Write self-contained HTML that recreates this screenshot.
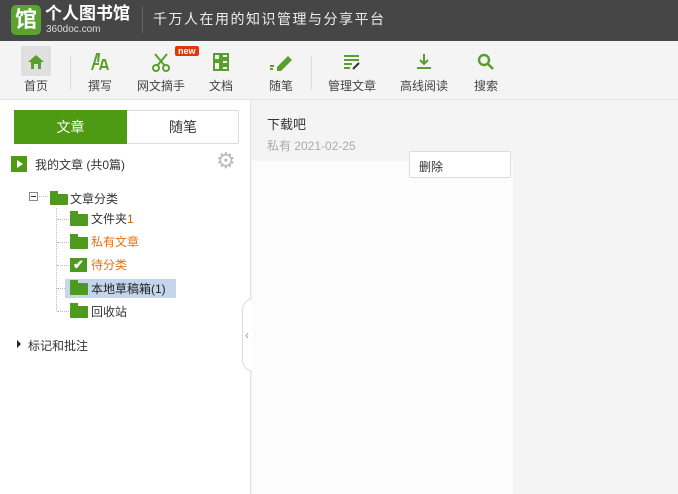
<!DOCTYPE html>
<html><head><meta charset="utf-8"><style>
*{margin:0;padding:0;box-sizing:border-box}
body{width:678px;height:494px;overflow:hidden;background:#f4f4f4;font-family:"Liberation Sans","Noto Sans CJK SC",sans-serif;font-size:12px;color:#333;position:relative}
.hd{position:absolute;left:0;top:0;width:678px;height:41px;background:#464646}
.logo{position:absolute;left:11px;top:5px;width:30px;height:30px;border-radius:5px;background:#5aa332;color:#fff;font-size:22px;line-height:30px;text-align:center;font-weight:bold}
.tb{position:absolute;left:0;top:41px;width:678px;height:59px;background:#f4f4f4;border-bottom:1px solid #e4e4e4}
.it{position:absolute;top:0;height:59px;text-align:center;color:#444;font-size:12px}
.it svg{display:block;margin:11px auto 0}
.it span{display:block;margin-top:5px}
.sep{position:absolute;top:15px;width:1px;height:34px;background:#ddd}
.left{position:absolute;left:0;top:100px;width:251px;height:394px;background:#fff;border-right:1px solid #e2e2e2}
.mid{position:absolute;left:252px;top:101px;width:261px;height:393px;background:#fcfcfc}
.f{position:absolute;width:18px;height:12px;background:#4e9a1e;border-radius:1px}
.f:before{content:"";position:absolute;left:0;top:-3px;width:8px;height:3px;background:#4e9a1e}
.t{position:absolute;font-size:12px}
.dot{position:absolute;border-color:#bbb;border-style:dotted;border-width:0}
</style></head><body>
<div class="hd">
<div class="logo">馆</div>
<div style="position:absolute;left:45px;top:4px;color:#fff;font-size:17px;font-weight:bold;line-height:20px">个人图书馆</div>
<div style="position:absolute;left:46px;top:24px;color:#ddd;font-size:10px">360doc.com</div>
<div style="position:absolute;left:142px;top:6px;width:1px;height:27px;background:#666"></div>
<div style="position:absolute;left:153px;top:9px;color:#eee;font-size:14px;letter-spacing:1.5px">千万人在用的知识管理与分享平台</div>
</div>
<div class="tb">
<div style="position:absolute;left:21px;top:5px;width:30px;height:30px;background:#e0e0e0;border-radius:2px"></div>
<div class="it" style="left:16px;width:40px"><svg width="20" height="20" viewBox="0 0 20 20"><path d="M2 10L10 3L18 10H15V17H12V12H8V17H5V10Z" fill="#5a9e2c"/></svg><span>首页</span></div>
<div class="sep" style="left:70px"></div>
<div class="it" style="left:80px;width:40px"><svg width="20" height="20" viewBox="0 0 20 20"><path d="M2 18L7 2H9L8 10M4 12H9M10 18L13 8H15L18 18M11 15H17" stroke="#5a9e2c" stroke-width="2" fill="none"/></svg><span>撰写</span></div>
<div class="it" style="left:134px;width:54px"><svg width="22" height="20" viewBox="0 0 22 20"><path d="M5 2L15 14M17 2L7 14" stroke="#5a9e2c" stroke-width="2"/><circle cx="6" cy="16" r="3" stroke="#5a9e2c" stroke-width="2" fill="none"/><circle cx="16" cy="16" r="3" stroke="#5a9e2c" stroke-width="2" fill="none"/></svg><span>网文摘手</span></div>
<div style="position:absolute;left:175px;top:5px;background:#e0380c;color:#fff;font-size:9px;font-weight:bold;line-height:10px;padding:0 3px;border-radius:2px">new</div>
<div class="it" style="left:201px;width:40px"><svg width="20" height="20" viewBox="0 0 20 20"><path d="M3 2H9V8H3ZM11 2H17V6H11ZM3 10H9V18H3ZM11 8H17V12H11ZM11 14H17V18H11Z" stroke="#5a9e2c" stroke-width="2" fill="none"/></svg><span>文档</span></div>
<div class="it" style="left:261px;width:40px"><svg width="26" height="20" viewBox="0 0 26 20"><path d="M9 15L20 4L24 8L13 19H9Z" fill="#5a9e2c"/><path d="M2 17H5M2 14H6" stroke="#5a9e2c" stroke-width="2"/></svg><span>随笔</span></div>
<div class="sep" style="left:311px"></div>
<div class="it" style="left:324px;width:56px"><svg width="20" height="20" viewBox="0 0 20 20"><path d="M2 4H17M2 8H17M2 12H10M2 16H8" stroke="#5a9e2c" stroke-width="2"/><path d="M11 17L17 11" stroke="#333" stroke-width="2"/></svg><span>管理文章</span></div>
<div class="it" style="left:396px;width:56px"><svg width="20" height="20" viewBox="0 0 20 20"><path d="M10 2V12M6 8L10 12L14 8M3 16H17" stroke="#5a9e2c" stroke-width="2" fill="none"/></svg><span>高线阅读</span></div>
<div class="it" style="left:466px;width:40px"><svg width="20" height="20" viewBox="0 0 20 20"><circle cx="8" cy="8" r="5" stroke="#5a9e2c" stroke-width="2.4" fill="none"/><path d="M12 12L17 17" stroke="#5a9e2c" stroke-width="2.6"/></svg><span>搜索</span></div>
</div>
<div class="left">
<div style="position:absolute;left:14px;top:10px;width:225px;height:34px;border:1px solid #ddd;border-radius:2px"></div>
<div style="position:absolute;left:14px;top:10px;width:113px;height:34px;background:#4e9a12;color:#fff;font-size:14px;text-align:center;line-height:34px">文章</div>
<div style="position:absolute;left:127px;top:10px;width:112px;height:34px;color:#333;font-size:14px;text-align:center;line-height:34px">随笔</div>
<div style="position:absolute;left:11px;top:56px;width:16px;height:16px;background:#4e9a12"></div>
<div style="position:absolute;left:17px;top:60px;border-left:6px solid #fff;border-top:4px solid transparent;border-bottom:4px solid transparent"></div>
<div class="t" style="left:35px;top:56px;color:#333">我的文章 (共0篇)</div>
<div style="position:absolute;left:216px;top:50px;color:#bbb;font-size:22px;line-height:24px;font-family:'DejaVu Sans',sans-serif">⚙</div>
<div style="position:absolute;left:29px;top:92px;width:9px;height:9px;border:1px solid #888;background:#fff"></div>
<div style="position:absolute;left:31px;top:96px;width:5px;height:1px;background:#333"></div>
<div class="dot" style="left:39px;top:96px;width:9px;border-top-width:1px"></div>
<div class="f" style="left:50px;top:94px;height:11px"></div>
<div class="t" style="left:70px;top:90px">文章分类</div>
<div class="dot" style="left:56px;top:108px;height:103px;border-left-width:1px"></div>
<div class="dot" style="left:57px;top:119px;width:12px;border-top-width:1px"></div>
<div class="dot" style="left:57px;top:142px;width:12px;border-top-width:1px"></div>
<div class="dot" style="left:57px;top:165px;width:12px;border-top-width:1px"></div>
<div class="dot" style="left:57px;top:188px;width:8px;border-top-width:1px"></div>
<div class="dot" style="left:57px;top:211px;width:12px;border-top-width:1px"></div>
<div class="f" style="left:70px;top:114px"></div><div class="t" style="left:91px;top:110px">文件夹<span style="color:#c60">1</span></div>
<div class="f" style="left:70px;top:137px"></div><div class="t" style="left:91px;top:133px;color:#e8720c">私有文章</div>
<div style="position:absolute;left:70px;top:158px;width:17px;height:14px;background:#4e9a1e;color:#fff;font-size:13px;line-height:14px;text-align:center;font-weight:bold">✔</div><div class="t" style="left:91px;top:156px;color:#e8720c">待分类</div>
<div style="position:absolute;left:65px;top:179px;width:111px;height:19px;background:#c4d5ec"></div>
<div class="f" style="left:70px;top:183px"></div><div class="t" style="left:91px;top:180px;color:#222">本地草稿箱(1)</div>
<div class="f" style="left:70px;top:206px"></div><div class="t" style="left:91px;top:203px">回收站</div>
<div style="position:absolute;left:17px;top:240px;border-left:4px solid #222;border-top:4px solid transparent;border-bottom:4px solid transparent"></div>
<div class="t" style="left:28px;top:237px">标记和批注</div>
<div style="position:absolute;left:242px;top:198px;width:12px;height:74px;border:1px solid #ddd;border-right:none;border-radius:12px 0 0 12px;background:#fff;color:#999;font-size:12px;line-height:72px;padding-left:2px">‹</div>
</div>
<div class="mid">
<div style="position:absolute;left:0;top:0;width:261px;height:60px;background:#f4f4f4"></div>
<div class="t" style="left:15px;top:13px;font-size:13px;color:#333">下载吧</div>
<div class="t" style="left:15px;top:36px;color:#aaa">私有 2021-02-25</div>
</div>
<div style="position:absolute;left:409px;top:151px;width:102px;height:27px;background:#fff;border:1px solid #ddd;border-radius:2px;padding:6px 0 0 9px;font-size:12px">删除</div>
</body></html>
